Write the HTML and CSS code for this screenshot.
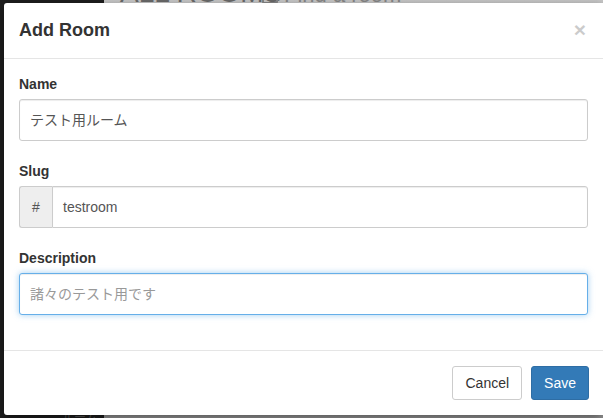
FILE: index.html
```html
<!DOCTYPE html>
<html lang="ja">
<head>
<meta charset="utf-8">
<title>Add Room</title>
<link rel="stylesheet" href="styles.css">
</head>
<body>
<div class="backdrop">
  <div class="sidebar"><span class="side-text">ルーム</span></div>
  <div class="main"><span class="main-title">ALL ROOMS</span><span class="main-find"><span class="find-icon"></span>Find a room</span></div>
</div>
<div class="modal">
  <div class="modal-header">
    <h4 class="modal-title">Add Room</h4>
    <span class="close">×</span>
  </div>
  <div class="modal-body">
    <div class="form-group">
      <label class="label">Name</label>
      <div class="input">テスト用ルーム</div>
    </div>
    <div class="form-group">
      <label class="label">Slug</label>
      <div class="input-group">
        <span class="addon">#</span>
        <div class="input input-grouped">testroom</div>
      </div>
    </div>
    <div class="form-group">
      <label class="label">Description</label>
      <div class="input input-focus placeholder">諸々のテスト用です</div>
    </div>
  </div>
  <div class="modal-footer">
    <button class="btn btn-default">Cancel</button>
    <button class="btn btn-primary">Save</button>
  </div>
</div>
</body>
</html>
```
FILE: styles.css
```css
html, body {
  margin: 0;
  padding: 0;
  height: 100%;
  overflow: hidden;
}
body {
  font-family: "Liberation Sans", Arial, "Noto Sans CJK JP", sans-serif;
  font-size: 14px;
  line-height: 20px;
  color: #333;
  position: relative;
}
.backdrop {
  display: flex;
  height: 100%;
}
.sidebar {
  width: 104px;
  background: #1e1e1e;
  position: relative;
}
.side-text {
  position: absolute;
  left: 62px;
  bottom: -10px;
  color: #555;
  font-size: 12px;
}
.main {
  flex: 1;
  background: linear-gradient(#c8c8c8, #b4b4b4 60%, #9a9a9a);
  position: relative;
  color: #6a6a6a;
  white-space: nowrap;
}
.main-title {
  position: absolute;
  left: 16px;
  top: -21px;
  font-size: 28px;
  line-height: 28px;
}
.main-find {
  position: absolute;
  left: 158px;
  top: -17px;
  font-size: 22px;
  line-height: 24px;
  color: #888;
  display: flex;
  align-items: center;
  gap: 6px;
}
.find-icon {
  width: 12px;
  height: 14px;
  border: 2px solid #888;
  border-radius: 2px;
}
.modal {
  position: absolute;
  left: 4px;
  top: 3px;
  width: 599px;
  background: #fff;
  border-radius: 3px 0 0 3px;
  box-shadow: 0 4px 12px rgba(0, 0, 0, 0.45);
}
.modal-header {
  display: flex;
  align-items: center;
  justify-content: space-between;
  padding: 15px;
  border-bottom: 1px solid #e5e5e5;
}
.modal-title {
  margin: 0;
  font-size: 18px;
  line-height: 25px;
  font-weight: bold;
  color: #333;
}
.close {
  font-size: 21px;
  font-weight: bold;
  line-height: 1;
  color: #000;
  opacity: 0.2;
  margin-right: 2px;
  margin-top: -2px;
}
.modal-body {
  padding: 15px;
}
.form-group {
  margin-bottom: 20px;
}
.label {
  display: block;
  font-weight: bold;
  margin-bottom: 5px;
}
.input {
  box-sizing: border-box;
  height: 42px;
  padding: 10px 10px;
  border: 1px solid #ccc;
  border-radius: 3px;
  box-shadow: inset 0 1px 1px rgba(0, 0, 0, 0.075);
  background: #fff;
  color: #555;
}
.input-focus {
  border-color: #66afe9;
  box-shadow: inset 0 1px 1px rgba(0, 0, 0, 0.075), 0 0 6px rgba(102, 175, 233, 0.6);
}
.placeholder {
  color: #999;
}
.input-group {
  display: flex;
}
.addon {
  box-sizing: border-box;
  width: 33px;
  height: 42px;
  display: flex;
  align-items: center;
  justify-content: center;
  background: #eee;
  border: 1px solid #ccc;
  border-right: 0;
  border-radius: 3px 0 0 3px;
  color: #555;
}
.input-grouped {
  flex: 1;
  border-radius: 0 3px 3px 0;
}
.modal-footer {
  display: flex;
  justify-content: flex-end;
  gap: 9px;
  padding: 15px 14px 15px 15px;
  border-top: 1px solid #e5e5e5;
}
.btn {
  font-family: inherit;
  font-size: 14px;
  line-height: 20px;
  padding: 6px 12px;
  border: 1px solid transparent;
  border-radius: 3px;
  margin: 0;
}
.btn-default {
  background: #fff;
  border-color: #ccc;
  color: #333;
}
.btn-primary {
  background: #337ab7;
  border-color: #2e6da4;
  color: #fff;
}
```
